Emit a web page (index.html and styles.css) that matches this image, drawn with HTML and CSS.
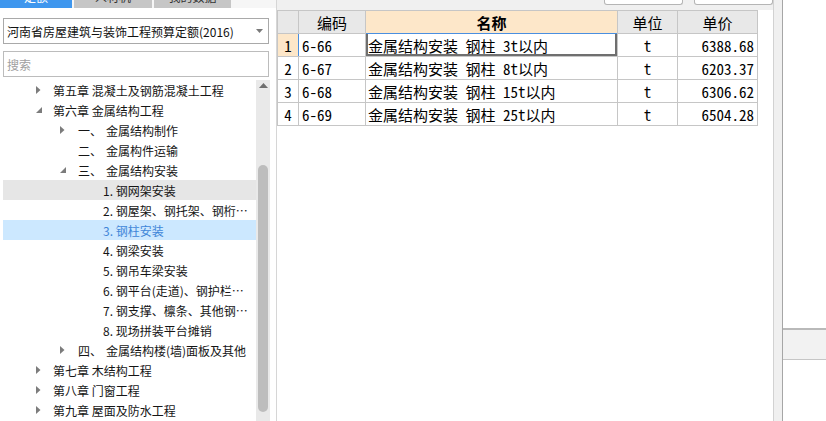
FILE: index.html
```html
<!DOCTYPE html>
<html lang="zh-CN">
<head>
<meta charset="utf-8">
<title>定额</title>
<link rel="stylesheet" href="styles.css">
</head>
<body>
<div class="app">
  <aside class="left">
    <div class="tabs">
      <div class="tab tab-active"><span>定额</span></div>
      <div class="tab tab-mid"><span>人材机</span></div>
      <div class="tab tab-last"><span>我的数据</span></div>
    </div>
    <div class="lbody">
      <div class="select">
        <span class="select-text">河南省房屋建筑与装饰工程预算定额(2016)</span>
        <svg class="select-arrow" width="7" height="4" viewBox="0 0 7 4"><path d="M0 0H7L3.5 4Z"/></svg>
      </div>
      <div class="search">搜索</div>
      <div class="treewrap">
        <ul class="tree">
          <li class="row l1"><span class="tw"><svg width="5" height="8" viewBox="0 0 5 8"><path d="M0 0L4.5 4L0 8Z"/></svg></span><span>第五章 混凝土及钢筋混凝土工程</span></li>
          <li class="row l1"><span class="tw"><svg width="6" height="6" viewBox="0 0 6 6"><path d="M6 0V6H0Z"/></svg></span><span>第六章 金属结构工程</span></li>
          <li class="row l2"><span class="tw"><svg width="5" height="8" viewBox="0 0 5 8"><path d="M0 0L4.5 4L0 8Z"/></svg></span><span class="num">一、</span><span>金属结构制作</span></li>
          <li class="row l2"><span class="tw"></span><span class="num">二、</span><span>金属构件运输</span></li>
          <li class="row l2"><span class="tw"><svg width="6" height="6" viewBox="0 0 6 6"><path d="M6 0V6H0Z"/></svg></span><span class="num">三、</span><span>金属结构安装</span></li>
          <li class="row l3 hover">1. 钢网架安装</li>
          <li class="row l3">2. 钢屋架、钢托架、钢桁…</li>
          <li class="row l3 selected">3. 钢柱安装</li>
          <li class="row l3">4. 钢梁安装</li>
          <li class="row l3">5. 钢吊车梁安装</li>
          <li class="row l3">6. 钢平台(走道)、钢护栏…</li>
          <li class="row l3">7. 钢支撑、檩条、其他钢…</li>
          <li class="row l3">8. 现场拼装平台摊销</li>
          <li class="row l2"><span class="tw"><svg width="5" height="8" viewBox="0 0 5 8"><path d="M0 0L4.5 4L0 8Z"/></svg></span><span class="num">四、</span><span>金属结构楼(墙)面板及其他</span></li>
          <li class="row l1"><span class="tw"><svg width="5" height="8" viewBox="0 0 5 8"><path d="M0 0L4.5 4L0 8Z"/></svg></span><span>第七章 木结构工程</span></li>
          <li class="row l1"><span class="tw"><svg width="5" height="8" viewBox="0 0 5 8"><path d="M0 0L4.5 4L0 8Z"/></svg></span><span>第八章 门窗工程</span></li>
          <li class="row l1"><span class="tw"><svg width="5" height="8" viewBox="0 0 5 8"><path d="M0 0L4.5 4L0 8Z"/></svg></span><span>第九章 屋面及防水工程</span></li>
        </ul>
        <div class="vscroll">
          <svg class="vs-up" width="9" height="5" viewBox="0 0 9 5"><path d="M0 5L4.5 0L9 5Z"/></svg>
          <div class="thumb"></div>
        </div>
      </div>
    </div>
  </aside>

  <main class="right">
    <div class="toolbar">
      <div class="tbtn"></div>
      <div class="tbtn"></div>
    </div>
    <div class="grid">
      <div class="c hd"></div>
      <div class="c hd center">编码</div>
      <div class="c hd center name-hd">名称</div>
      <div class="c hd center">单位</div>
      <div class="c hd center">单价</div>

      <div class="c center rn rn-active">1</div>
      <div class="c code code-active">6-66</div>
      <div class="c name cell-focus">金属结构安装 钢柱 3t以内</div>
      <div class="c center">t</div>
      <div class="c price">6388.68</div>

      <div class="c center rn">2</div>
      <div class="c code">6-67</div>
      <div class="c name">金属结构安装 钢柱 8t以内</div>
      <div class="c center">t</div>
      <div class="c price">6203.37</div>

      <div class="c center rn">3</div>
      <div class="c code">6-68</div>
      <div class="c name">金属结构安装 钢柱 15t以内</div>
      <div class="c center">t</div>
      <div class="c price">6306.62</div>

      <div class="c center rn">4</div>
      <div class="c code">6-69</div>
      <div class="c name">金属结构安装 钢柱 25t以内</div>
      <div class="c center">t</div>
      <div class="c price">6504.28</div>
    </div>
  </main>

  <div class="splitter"></div>

  <div class="far">
    <div class="band"></div>
  </div>
</div>
</body>
</html>
```

FILE: styles.css
```css
* { box-sizing: border-box; }

html, body {
  margin: 0;
  padding: 0;
  width: 826px;
  height: 421px;
  overflow: hidden;
  background: #ffffff;
}

.app {
  display: flex;
  width: 826px;
  height: 421px;
  font-family: "Noto Sans CJK SC", "Noto Sans", sans-serif;
  color: #1a1a1a;
}

/* ---------- left panel ---------- */
.left {
  width: 277px;
  flex: none;
  border-right: 1px solid #d6d6d6;
  display: flex;
  flex-direction: column;
  background: #ffffff;
}

.tabs {
  height: 8px;
  display: flex;
  gap: 2px;
  background: #f6f6f6;
}

.tab {
  height: 8px;
  overflow: hidden;
  display: flex;
  align-items: flex-end;
  justify-content: center;
  background: #c6c6c6;
  color: #333;
  font-size: 12px;
}
.tab span { line-height: 12px; margin-bottom: 5px; }
.tab-active { width: 72px; background: #3f97ee; color: #fff; }
.tab-mid { width: 78px; }
.tab-last { width: 77px; }

.lbody {
  padding-left: 3px;
  display: flex;
  flex-direction: column;
  flex: 1;
  min-height: 0;
}

.select {
  margin-top: 10px;
  width: 266px;
  height: 26px;
  border: 1px solid #a9a9a9;
  display: flex;
  align-items: center;
  justify-content: space-between;
  padding: 0 5px 0 3px;
  font-size: 12px;
  color: #111;
}
.select-arrow { fill: #7a7a7a; }

.search {
  margin-top: 7px;
  width: 266px;
  height: 26px;
  border: 1px solid #bcbcbc;
  display: flex;
  align-items: center;
  padding-left: 3px;
  font-size: 12px;
  color: #a0a0a0;
}

.treewrap {
  margin-top: 3px;
  display: flex;
  flex: 1;
  min-height: 0;
  overflow: hidden;
}

.tree {
  list-style: none;
  margin: 0;
  padding: 0;
  width: 253px;
  flex: none;
}

.row {
  height: 20px;
  display: flex;
  align-items: center;
  font-size: 12px;
  white-space: nowrap;
  color: #151515;
}
.row.l1 { padding-left: 33px; }
.row.l2 { padding-left: 57px; }
.row.l3 { padding-left: 100px; }
.row.l1 .tw { width: 17px; }
.row.l2 .tw { width: 18px; }
.tw { display: flex; align-items: center; flex: none; }
.tw svg { fill: #7c7c7c; }
.num { width: 28px; flex: none; }

.row.hover { background: #e6e6e6; }
.row.selected { background: #cce8ff; color: #3f86d8; }

.vscroll {
  width: 14px;
  flex: none;
  background: #e9e9e9;
  display: flex;
  flex-direction: column;
  align-items: center;
}
.vs-up { margin-top: 3px; fill: #6e6e6e; }
.thumb {
  margin-top: 77px;
  width: 10px;
  height: 247px;
  border-radius: 5px;
  background: #bdbdbd;
}

/* ---------- right panel ---------- */
.right {
  width: 496px;
  flex: none;
  display: flex;
  flex-direction: column;
  background: #ffffff;
}

.toolbar {
  height: 10px;
  background: #f0f0f0;
  display: flex;
  justify-content: flex-end;
  align-items: flex-start;
  gap: 11px;
}
.tbtn {
  width: 79px;
  height: 5px;
  background: #ffffff;
  border: 1px solid #b5b5b5;
  border-top: none;
  border-radius: 0 0 3px 3px;
}

.grid {
  display: grid;
  grid-template-columns: 20px 66px 251px 59px 79px;
  grid-auto-rows: 22px;
  gap: 1px;
  padding: 1px;
  background: #c6c6c6;
  width: max-content;
  font-family: "Noto Sans Mono CJK SC", "Noto Sans CJK SC", monospace;
  font-size: 15px;
  color: #000;
}

.c {
  background: #ffffff;
  display: flex;
  align-items: center;
  white-space: nowrap;
  overflow: hidden;
  line-height: 1;
}
.center { justify-content: center; }
.hd { background: #e8e8e8; }
.name-hd { background: #fde7c9; font-weight: bold; }
.rn-active { background: #fde7c9; }
.code { padding-left: 3px; }
.code-active { box-shadow: -1px 0 0 #4a8fe0; }
.name { padding-left: 2px; }
.price { justify-content: flex-end; padding-right: 3px; }
.cell-focus {
  box-shadow: inset 2px 0 0 #6f6f6f, inset -2px 0 0 #6f6f6f, inset 0 -2px 0 #6f6f6f, 0 -1px 0 #4a8fe0;
}

/* ---------- splitter & far right ---------- */
.splitter {
  width: 10px;
  flex: none;
  background: #f0f0f0;
  border-left: 1px solid #d2d2d2;
  border-right: 1px solid #a6a6a6;
}

.far {
  flex: 1;
  background: #ffffff;
}
.band {
  margin-top: 328px;
  height: 32px;
  background: #f2f2f2;
  border-top: 2px solid #b9b9b9;
  border-bottom: 1px solid #c6c6c6;
}
```
